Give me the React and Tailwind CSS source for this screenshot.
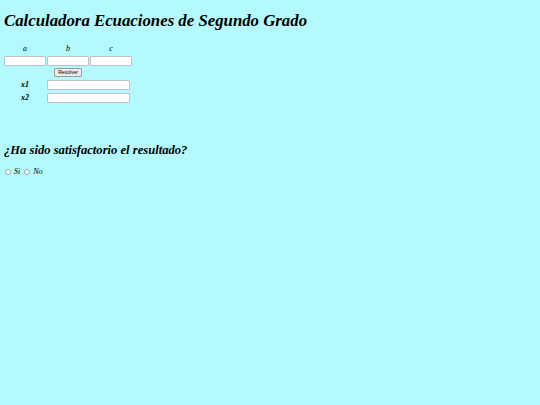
import React from "react";

function Field({ className = "" }) {
  return <div className={"h-[10px] border border-[#b9c3c6] bg-white rounded-[1px] " + className} />;
}

export default function App() {
  return (
    <div className="min-h-screen w-full bg-[#b3f9fe] text-black px-[4px] pt-[10px]" style={{ fontFamily: '"Liberation Serif", serif' }}>
      <h1 className="text-[16.8px] leading-[22px] font-bold italic">Calculadora Ecuaciones de Segundo Grado</h1>

      <div className="mt-[12px] grid grid-cols-[42px_42px_42px] gap-x-[1px] w-max">
        <div className="text-center italic text-[8px] leading-[10px]">a</div>
        <div className="text-center italic text-[8px] leading-[10px]">b</div>
        <div className="text-center italic text-[8px] leading-[10px]">c</div>

        <Field className="mt-[2px]" />
        <Field className="mt-[2px]" />
        <Field className="mt-[2px]" />

        <div />
        <div className="flex justify-center mt-[2px]">
          <button className="h-[9px] px-[2px] w-[28px] border border-[#9a9a9a] bg-[#ececec] rounded-[1px] text-[5px] leading-[7px]" style={{ fontFamily: '"Liberation Sans", sans-serif' }}>
            Resolver
          </button>
        </div>
        <div />

        <div className="mt-[3px] self-center text-center font-bold italic text-[8px] leading-[8px]">x1</div>
        <Field className="mt-[3px] col-span-2 w-[83px] h-[9px]" />

        <div className="mt-[3px] self-center text-center font-bold italic text-[8px] leading-[8px]">x2</div>
        <Field className="mt-[3px] col-span-2 w-[83px] h-[9px]" />
      </div>

      <h2 className="mt-[39px] text-[12.6px] leading-[16px] font-bold italic">¿Ha sido satisfactorio el resultado?</h2>

      <div className="mt-[9px] flex items-center text-[8px] italic leading-[10px] pl-[1px]">
        <span className="w-[6px] h-[6px] rounded-full border border-[#9aa] bg-white" />
        <span className="ml-[3px]">Si</span>
        <span className="ml-[4px] w-[6px] h-[6px] rounded-full border border-[#9aa] bg-white" />
        <span className="ml-[3px]">No</span>
      </div>
    </div>
  );
}
